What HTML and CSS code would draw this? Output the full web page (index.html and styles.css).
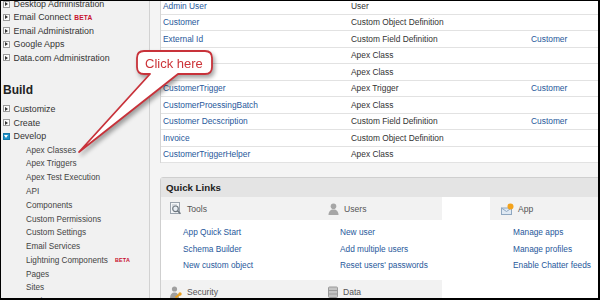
FILE: index.html
```html
<!DOCTYPE html>
<html lang="en">
<head>
<meta charset="utf-8">
<title>Setup - Develop</title>
<link rel="stylesheet" href="styles.css">
</head>
<body>
<div class="frame">
  <aside class="sidebar">
    <ul class="nav nav-top">
      <li class="item"><span class="tw"></span>Desktop Administration</li>
      <li class="item"><span class="tw"></span>Email Connect<span class="beta">BETA</span></li>
      <li class="item"><span class="tw"></span>Email Administration</li>
      <li class="item"><span class="tw"></span>Google Apps</li>
      <li class="item"><span class="tw"></span>Data.com Administration</li>
    </ul>
    <h2 class="build">Build</h2>
    <ul class="nav nav-build">
      <li class="item"><span class="tw"></span>Customize</li>
      <li class="item"><span class="tw"></span>Create</li>
      <li class="item"><span class="tw open"></span>Develop</li>
      <li class="sub">Apex Classes</li>
      <li class="sub">Apex Triggers</li>
      <li class="sub">Apex Test Execution</li>
      <li class="sub">API</li>
      <li class="sub">Components</li>
      <li class="sub">Custom Permissions</li>
      <li class="sub">Custom Settings</li>
      <li class="sub">Email Services</li>
      <li class="sub">Lightning Components<span class="beta small">BETA</span></li>
      <li class="sub">Pages</li>
      <li class="sub">Sites</li>
      <li class="sub">Static Resources</li>
    </ul>
  </aside>

  <main class="main">
    <div class="results">
      <div class="row"><a class="lnk">Admin User</a><span>User</span><span></span></div>
      <div class="row"><a class="lnk">Customer</a><span>Custom Object Definition</span><span></span></div>
      <div class="row"><a class="lnk">External Id</a><span>Custom Field Definition</span><a class="lnk">Customer</a></div>
      <div class="row"><span></span><span>Apex Class</span><span></span></div>
      <div class="row"><span></span><span>Apex Class</span><span></span></div>
      <div class="row"><a class="lnk">CustomerTrigger</a><span>Apex Trigger</span><a class="lnk">Customer</a></div>
      <div class="row"><a class="lnk">CustomerProessingBatch</a><span>Apex Class</span><span></span></div>
      <div class="row"><a class="lnk">Customer Decscription</a><span>Custom Field Definition</span><a class="lnk">Customer</a></div>
      <div class="row"><a class="lnk">Invoice</a><span>Custom Object Definition</span><span></span></div>
      <div class="row"><a class="lnk">CustomerTriggerHelper</a><span>Apex Class</span><span></span></div>
    </div>

    <section class="quick">
      <div class="quick-head">Quick Links</div>
      <div class="quick-grid">
        <div class="qsec">
          <div class="qhead">
            <svg class="qicon" width="12" height="13" viewBox="0 0 12 13"><rect x="0.5" y="0.5" width="9" height="11" fill="#f4f6f8" stroke="#9aa3ad"/><path d="M2 3h5M2 5h3" stroke="#b5bcc4"/><circle cx="5.5" cy="6.8" r="2.8" fill="#e8eef4" stroke="#6f7880" stroke-width="1.2"/><path d="M7.5 8.8l3 3" stroke="#6f7880" stroke-width="1.6"/></svg>
            <span>Tools</span>
          </div>
          <ul class="qlinks l1">
            <li><a class="lnk">App Quick Start</a></li>
            <li><a class="lnk">Schema Builder</a></li>
            <li><a class="lnk">New custom object</a></li>
          </ul>
        </div>
        <div class="qsec">
          <div class="qhead narrow">
            <svg class="qicon" width="11" height="12" viewBox="0 0 11 12"><circle cx="5.5" cy="3.3" r="2.8" fill="#a6a6a6"/><path d="M0.5 12c0-3.5 2-5.5 5-5.5s5 2 5 5.5z" fill="#a6a6a6"/></svg>
            <span>Users</span>
          </div>
          <ul class="qlinks l2">
            <li><a class="lnk">New user</a></li>
            <li><a class="lnk">Add multiple users</a></li>
            <li><a class="lnk">Reset users' passwords</a></li>
          </ul>
        </div>
        <div class="qsec">
          <div class="qhead wide">
            <svg class="qicon" width="13" height="12" viewBox="0 0 13 12"><rect x="0.5" y="5" width="10" height="6.5" fill="#dfe9f3" stroke="#8fa7c0"/><path d="M0.5 5l5 3.5 5-3.5" fill="none" stroke="#8fa7c0"/><circle cx="9.5" cy="3.5" r="3" fill="#f3a21b"/></svg>
            <span>App</span>
          </div>
          <ul class="qlinks l3">
            <li><a class="lnk">Manage apps</a></li>
            <li><a class="lnk">Manage profiles</a></li>
            <li><a class="lnk">Enable Chatter feeds</a></li>
          </ul>
        </div>
        <div class="qsec">
          <div class="qhead">
            <svg class="qicon" width="12" height="12" viewBox="0 0 12 12"><circle cx="4.5" cy="3" r="2.6" fill="#a0a0a0"/><path d="M0 12c0-3.5 1.8-5.5 4.5-5.5S9 8.5 9 12z" fill="#a0a0a0"/><path d="M5.5 11.5l4-3" stroke="#e8a020" stroke-width="2"/><circle cx="10" cy="8" r="1.7" fill="#e8a020"/></svg>
            <span>Security</span>
          </div>
        </div>
        <div class="qsec">
          <div class="qhead narrow">
            <svg class="qicon" width="10" height="12" viewBox="0 0 10 12"><rect x="0.5" y="1" width="9" height="10.5" rx="1" fill="#c4c4c4" stroke="#9a9a9a"/><path d="M0.5 4.5h9M0.5 8h9" stroke="#9a9a9a"/></svg>
            <span>Data</span>
          </div>
        </div>
        <div class="qsec"></div>
      </div>
    </section>
  </main>

  <svg class="callout" width="600" height="300" viewBox="0 0 600 300">
    <path class="bubble" d="M144 51 H205 Q212 51 212 58 V67 Q212 74 205 74 H178 L79 152 L150 74 H144 Q137 74 137 67 V58 Q137 51 144 51 Z"/>
    <text class="bubble-text" x="145" y="68">Click here</text>
  </svg>
</div>
</body>
</html>
```

FILE: styles.css
```css
* { box-sizing: border-box; }

html, body {
  margin: 0;
  padding: 0;
  background: #fff;
}

body {
  font-family: "Liberation Sans", Arial, sans-serif;
  color: #333;
}

.frame {
  position: relative;
  width: 600px;
  height: 300px;
  border-style: solid;
  border-color: #000;
  border-width: 1px 2px 2px 1px;
  display: flex;
  overflow: hidden;
}

/* ---------- sidebar ---------- */
.sidebar {
  flex: none;
  width: 149px;
  background: #f1f1f1;
  border-right: 1px solid #d2d2d2;
}

.nav {
  list-style: none;
  margin: 0;
  padding: 0;
}

.nav-top { margin-top: -3.7px; }

.nav-top .item {
  height: 13.4px;
}

.item {
  display: flex;
  align-items: center;
  font-size: 8.9px;
  color: #333;
  white-space: nowrap;
}

.nav-build .item,
.nav-build .sub {
  height: 13.77px;
}

.sub {
  display: flex;
  align-items: center;
  padding-left: 25px;
  font-size: 8.2px;
  color: #444;
  white-space: nowrap;
}

.tw {
  position: relative;
  flex: none;
  width: 7px;
  height: 7px;
  margin: 0 4px 0 1.5px;
  border: 1px solid #9c9c9c;
  background: #fbfbfb;
}

.tw::after {
  content: "";
  position: absolute;
  left: 1.5px;
  top: 0.5px;
  border-left: 3px solid #333;
  border-top: 2px solid transparent;
  border-bottom: 2px solid transparent;
}

.tw.open {
  background: #1f92c9;
  border-color: #1679ab;
}

.tw.open::after {
  left: 0.5px;
  top: 1.5px;
  border-left: 2px solid transparent;
  border-right: 2px solid transparent;
  border-top: 3px solid #fff;
  border-bottom: 0;
}

.beta {
  margin-left: 3px;
  font-size: 6.6px;
  font-weight: bold;
  color: #c8102e;
  letter-spacing: 0.2px;
}

.beta.small {
  margin-left: 7px;
  font-size: 5.4px;
}

.build {
  margin: 17.7px 0 4.1px 2px;
  height: 16px;
  line-height: 16px;
  font-size: 12px;
  font-weight: bold;
  color: #222;
}

/* ---------- main ---------- */
.main {
  flex: 1;
  min-width: 0;
  background: #f4f4f4;
  padding-left: 10px;
  overflow: hidden;
}

.lnk {
  color: #27589b;
  text-decoration: none;
}

.results {
  width: 460px;
  margin-top: -3px;
  background: #fff;
  border-left: 1px solid #d6d6d6;
}

.row {
  display: grid;
  grid-template-columns: 188px 180px 1fr;
  align-items: center;
  height: 16.5px;
  border-bottom: 1px solid #e2e2e2;
  font-size: 8.4px;
  white-space: nowrap;
}

.row > * {
  padding-left: 2px;
}

.row > span { color: #333; }

/* ---------- quick links ---------- */
.quick {
  width: 460px;
  margin-top: 14px;
  background: #fff;
  border: 1px solid #cfcfcf;
  border-radius: 3px 3px 0 0;
}

.quick-head {
  height: 19px;
  display: flex;
  align-items: center;
  padding-left: 5px;
  background: #e4e4e4;
  font-size: 9.7px;
  font-weight: bold;
  color: #222;
}

.quick-grid {
  display: grid;
  grid-template-columns: 159px 170px 1fr;
}

.qhead {
  height: 23px;
  display: flex;
  align-items: center;
  gap: 5px;
  padding-left: 9px;
  background: #f2f2f2;
  font-size: 8.6px;
  color: #555;
}

.qhead.narrow {
  width: 122px;
  padding-left: 8px;
}

.qhead.wide {
  padding-left: 11px;
  gap: 4px;
}

.qicon { flex: none; }

.qlinks {
  list-style: none;
  margin: 0;
  padding: 4px 0 6.5px 0;
}

.qlinks li {
  height: 16.5px;
  display: flex;
  align-items: center;
  font-size: 8.3px;
  white-space: nowrap;
}

.l1 { padding-left: 22px; }
.l2 { padding-left: 20px; }
.l3 { padding-left: 23px; }

/* ---------- callout overlay ---------- */
.callout {
  position: absolute;
  left: -1px;
  top: -1px;
  pointer-events: none;
  filter: drop-shadow(2px 3px 2px rgba(0, 0, 0, 0.35));
}

.bubble {
  fill: #fff;
  stroke: #c8323a;
  stroke-width: 1.8;
  stroke-linejoin: round;
}

.bubble-text {
  font-family: "Liberation Sans", Arial, sans-serif;
  font-size: 13px;
  fill: #cc3338;
}
```
